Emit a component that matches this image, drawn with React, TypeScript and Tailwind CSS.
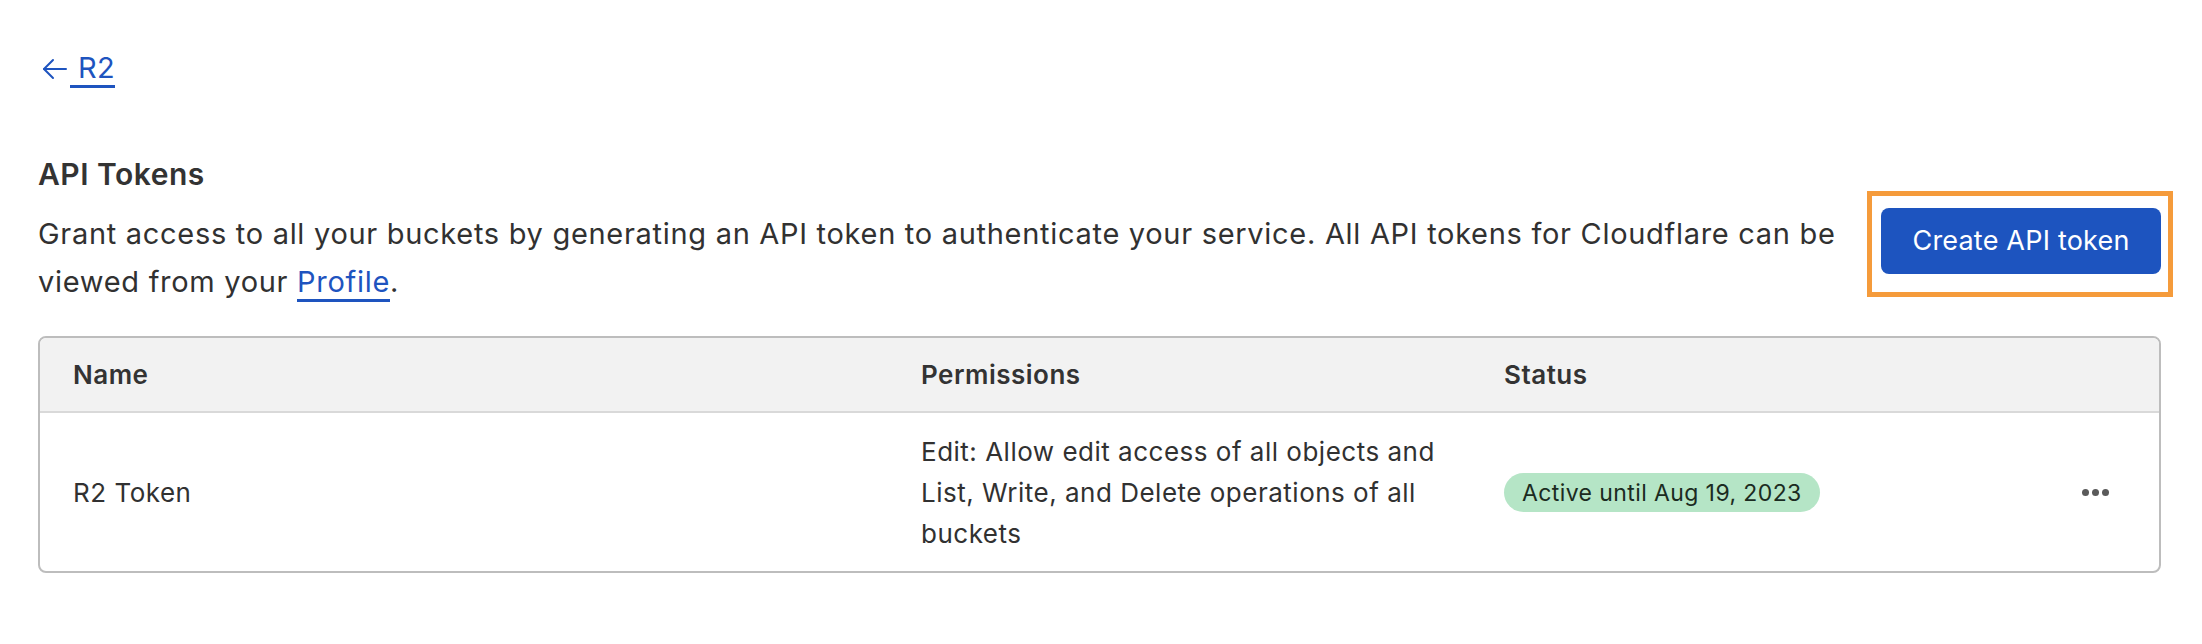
export default function App() {
  return (
    <div className="min-h-screen bg-white pl-[38px] pr-[41px] pt-[52px] font-[Inter,'Noto_Sans',sans-serif] text-[#313131]">
      <a className="flex h-[34px] items-center text-[29px] leading-[34px] tracking-[0.3px] text-[#1e54bf]">
        <svg width="25" height="24" viewBox="0 0 25 24" fill="none" stroke="#1e54bf" strokeWidth="2" strokeLinecap="round" strokeLinejoin="round" className="ml-[4px]">
          <path d="M24 12H2" />
          <path d="M11 3L2 12l9 9" />
        </svg>
        <span className="ml-[3px] border-b-[3px] border-[#1e54bf] pl-[8px]">R2</span>
      </a>

      <h1 className="mt-[71px] text-[30px] font-semibold leading-[34px] tracking-[0.5px] text-[#333333]">API Tokens</h1>

      <div className="mt-[19px] flex items-start gap-[40px]">
        <p className="flex-1 text-[29px] leading-[48px] tracking-[0.7px]">
          Grant access to all your buckets by generating an API token to authenticate your service. All API tokens for Cloudflare can be viewed from your{" "}
          <span className="border-b-[3px] border-[#1e54bf] text-[#1e54bf]">Profile</span>.
        </p>
        <div className="relative -mt-[2px] shrink-0">
          <button className="flex h-[66px] w-[280px] items-center justify-center rounded-[8px] bg-[#1d54bf] text-[27px] tracking-[0.2px] text-white">
            Create API token
          </button>
          <div className="pointer-events-none absolute -bottom-[23px] -left-[14px] -right-[12px] -top-[17px] border-[5px] border-[#f59b3b]" />
        </div>
      </div>

      <div className="mt-[30px] overflow-hidden rounded-[8px] border-2 border-[#bdbdbd]">
        <div className="grid h-[75px] grid-cols-[848px_583px_1fr_120px] items-center border-b-2 border-[#d9d9d9] bg-[#f2f2f2] text-[26px] font-semibold tracking-[0.5px] text-[#333333]">
          <div className="pl-[33px]">Name</div>
          <div className="pl-[33px]">Permissions</div>
          <div className="pl-[33px]">Status</div>
          <div />
        </div>
        <div className="grid h-[158px] grid-cols-[848px_583px_1fr_120px] items-center text-[26px] tracking-[0.5px] text-[#313131]">
          <div className="pl-[33px]">R2 Token</div>
          <div className="pl-[33px] pr-[20px] leading-[41px]">
            Edit: Allow edit access of all objects and List, Write, and Delete operations of all buckets
          </div>
          <div className="pl-[33px]">
            <span className="inline-flex h-[39px] items-center rounded-full bg-[#b5e5c6] px-[18px] text-[23px] tracking-[0.4px] text-[#1b2b21]">
              Active until Aug 19, 2023
            </span>
          </div>
          <div className="flex items-center gap-[3px] pl-[43px]">
            <span className="h-[7px] w-[7px] rounded-full bg-[#5a5a5a]" />
            <span className="h-[7px] w-[7px] rounded-full bg-[#5a5a5a]" />
            <span className="h-[7px] w-[7px] rounded-full bg-[#5a5a5a]" />
          </div>
        </div>
      </div>
    </div>
  );
}
